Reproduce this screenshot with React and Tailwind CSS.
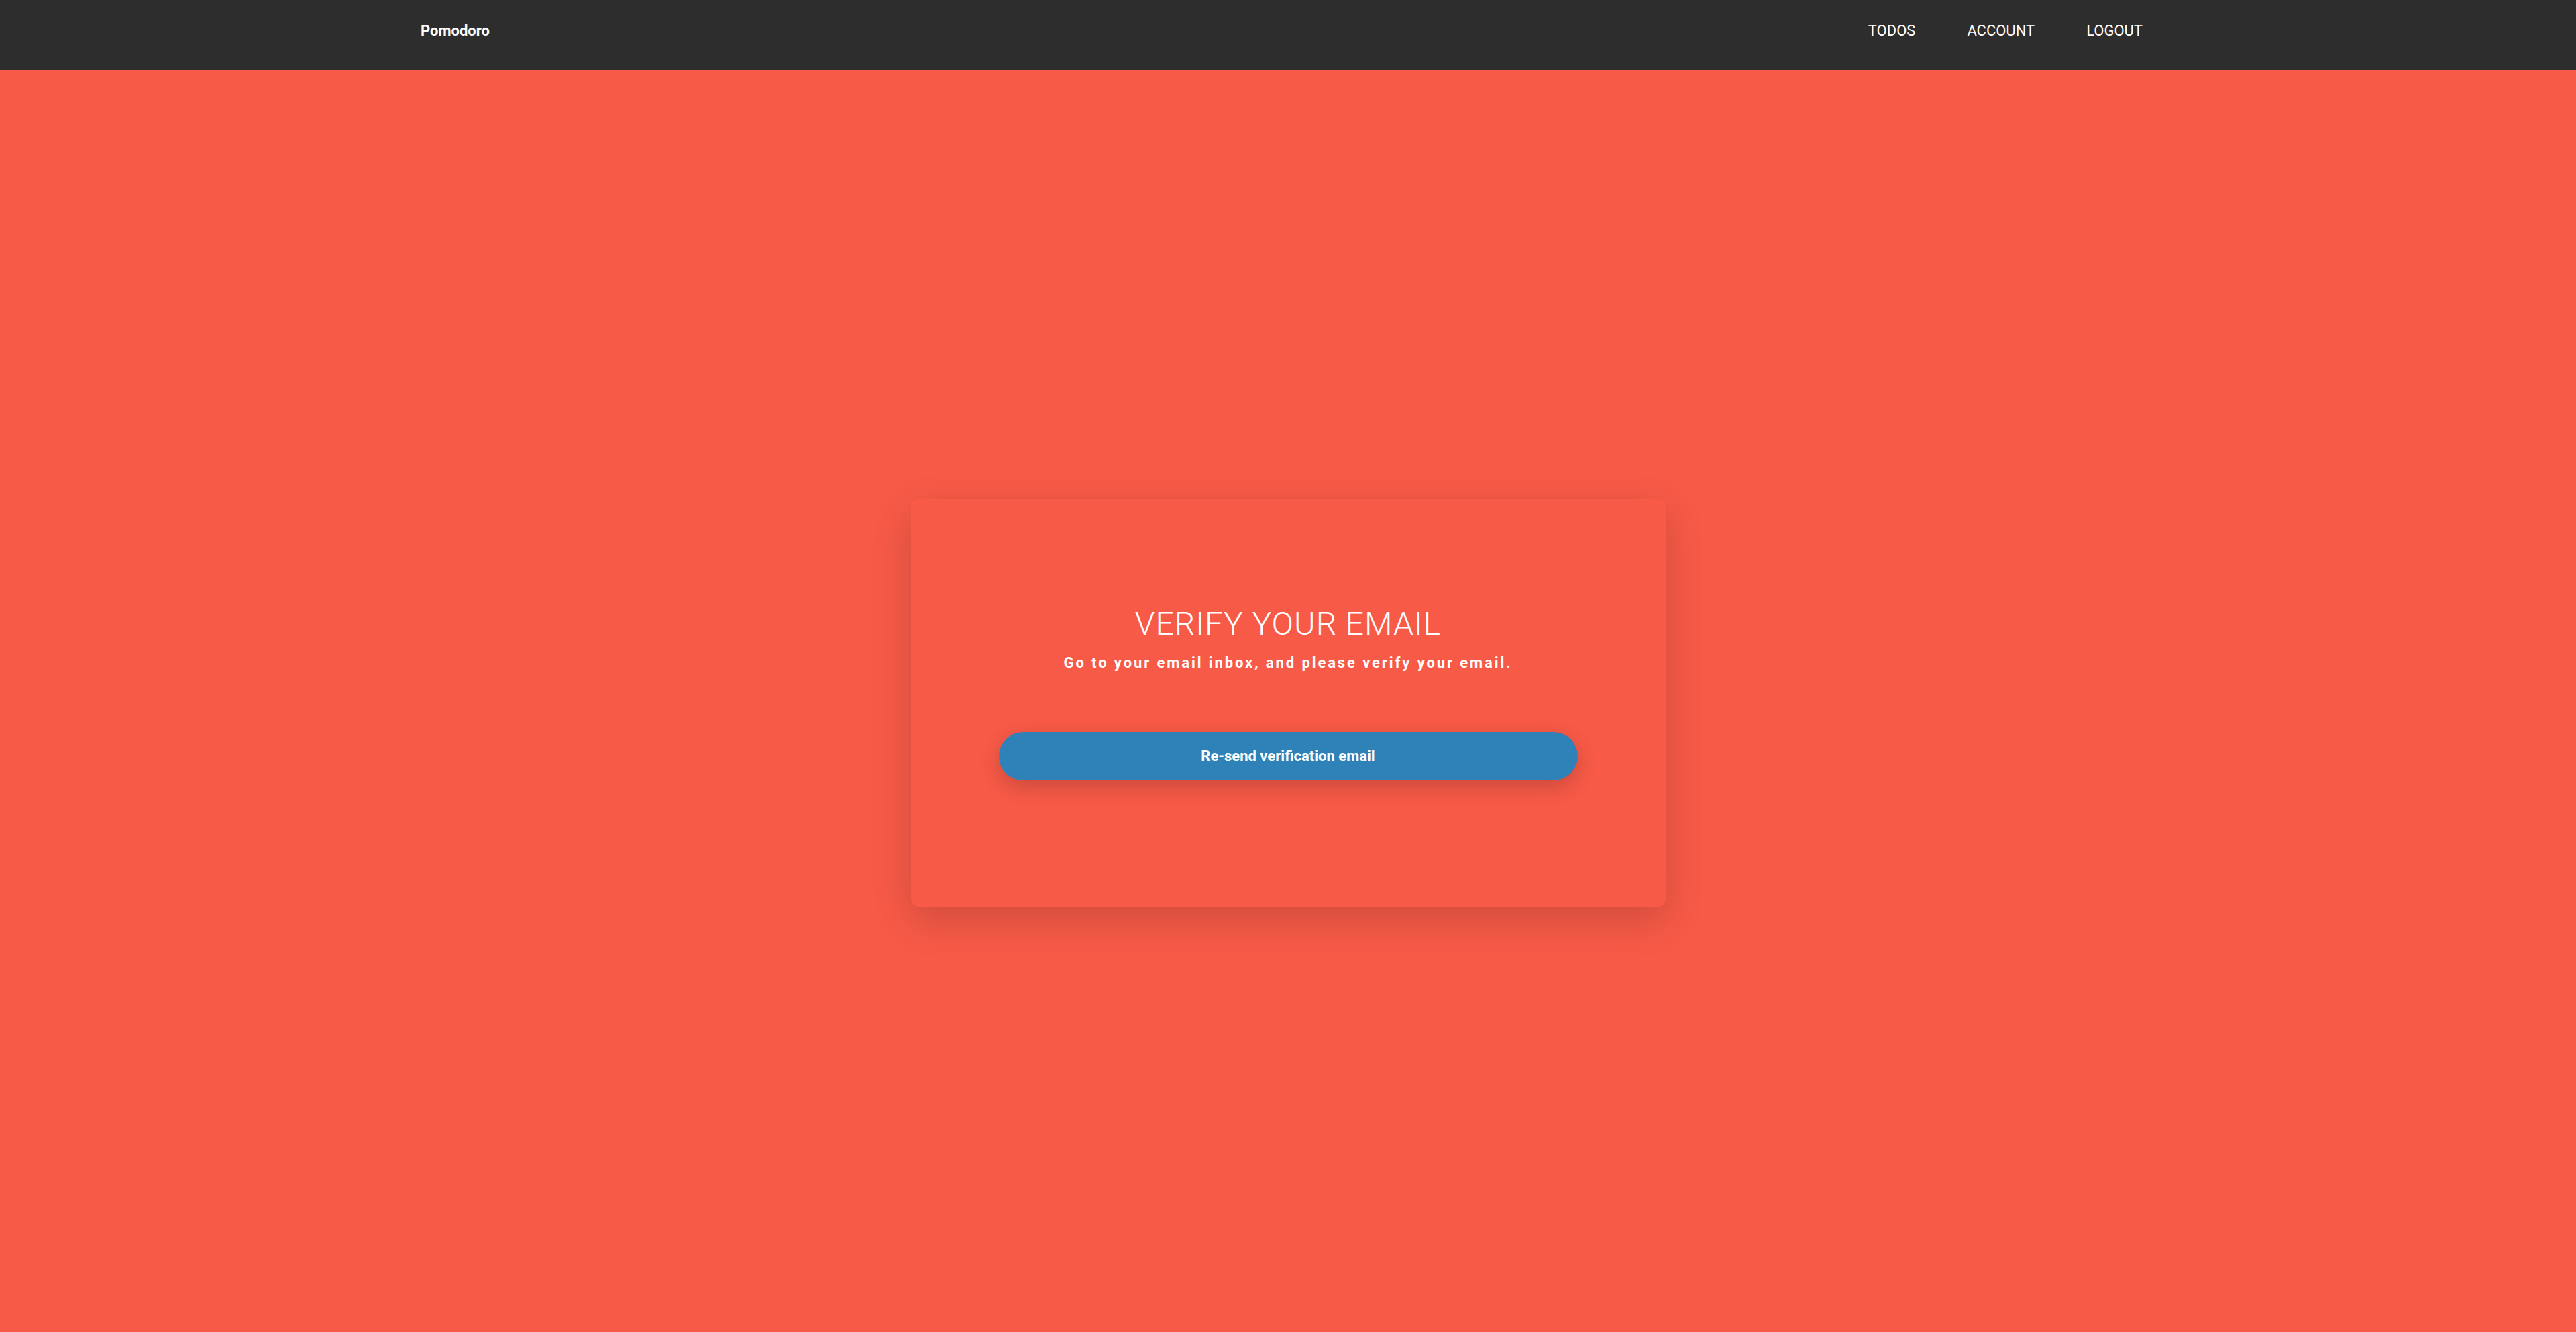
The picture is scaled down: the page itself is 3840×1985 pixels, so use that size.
import React from "react";

const links = ["TODOS", "ACCOUNT", "LOGOUT"];

const App = () => {
  return (
    <div className="flex min-h-screen flex-col bg-[#f75a47] font-['Roboto',sans-serif] text-white">
      <nav className="h-[105px] w-full bg-[#2d2d2d]">
        <div className="mx-auto flex h-full max-w-[2586px] items-center justify-between pb-[14px]">
          <a href="#" className="text-[22px] font-bold leading-[1.5]">
            Pomodoro
          </a>
          <ul className="flex gap-[77px] pr-[19px]">
            {links.map((l) => (
              <li key={l}>
                <a href="#" className="text-[22px] leading-[1.5]">
                  {l}
                </a>
              </li>
            ))}
          </ul>
        </div>
      </nav>

      <main className="flex flex-1 items-center justify-center pt-[4px]">
        <div className="flex w-[1125px] flex-col items-center rounded-[12px] bg-[#f75a47] px-[131px] pt-[158px] pb-[188px] shadow-[0_20px_60px_rgba(0,0,0,0.16)]">
          <h1 className="text-[48px] font-light leading-[1.2] tracking-[1px]">
            VERIFY YOUR EMAIL
          </h1>
          <p className="mt-[12px] text-[22px] font-bold leading-[1.5] tracking-[2.9px]">
            Go to your email inbox, and please verify your email.
          </p>
          <button className="mt-[87px] h-[72px] w-full rounded-full bg-[#2f82b8] text-[22px] font-bold shadow-[0_10px_30px_rgba(0,0,0,0.18)]">
            Re-send verification email
          </button>
        </div>
      </main>
    </div>
  );
};

export default App;
